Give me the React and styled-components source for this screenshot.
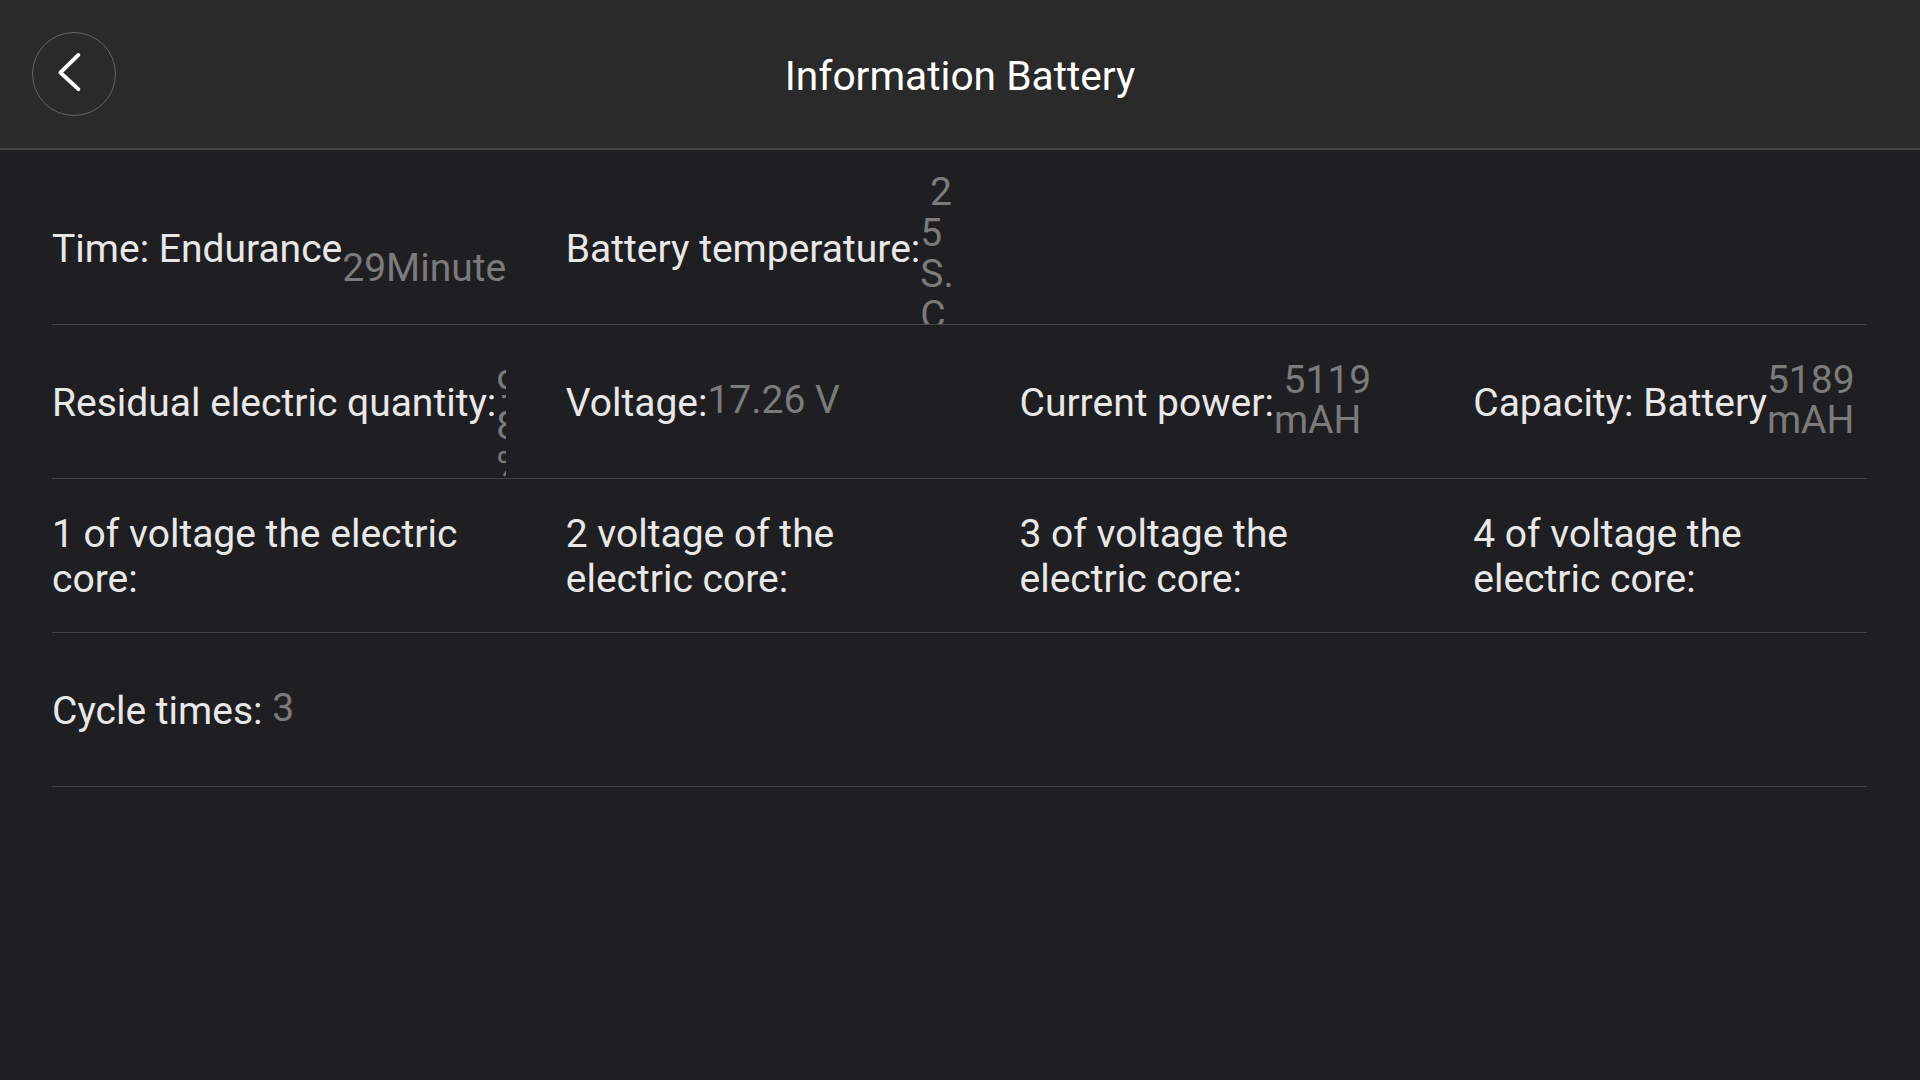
import React from 'react';
import styled, { createGlobalStyle } from 'styled-components';

const GlobalStyle = createGlobalStyle`
  html, body {
    margin: 0;
    padding: 0;
    background: #1f1f21;
  }
  body {
    font-family: Roboto, 'Noto Sans', 'Liberation Sans', sans-serif;
    -webkit-font-smoothing: antialiased;
  }
`;

const StyledPage = styled.div`
  width: 1920px;
  height: 1080px;
  background: #1f1f21;
  overflow: hidden;
`;

const Header = styled.header`
  height: 148px;
  display: grid;
  grid-template-columns: 1fr auto 1fr;
  align-items: center;
  background: #2a2a2a;
  border-bottom: 2px solid #474747;
`;

const BackButton = styled.button`
  justify-self: start;
  margin-left: 32px;
  width: 84px;
  height: 84px;
  padding: 0;
  border-radius: 50%;
  border: 1.5px solid #646464;
  background: transparent;
  display: flex;
  align-items: center;
  justify-content: center;
  cursor: pointer;
  svg {
    display: block;
  }
`;

const Title = styled.h1`
  margin: 4px 0 0;
  font-size: 40.7px;
  font-weight: 400;
  line-height: 48px;
  color: #ffffff;
`;

const List = styled.div`
  padding: 21px 53px 0 52px;
`;

const Row = styled.div`
  display: grid;
  grid-template-columns: repeat(4, 1fr);
  height: 153px;
  border-bottom: 1px solid #444446;
`;

const Cell = styled.div`
  display: flex;
  align-items: center;
  min-width: 0;
  padding: 3px 0 0 60px;
  overflow: hidden;
  &:first-child {
    padding-left: 0;
  }
`;

const Label = styled.div`
  font-size: 39px;
  line-height: 45px;
  color: #e8e8e8;
  &:not(:only-child) {
    flex-shrink: 0;
    white-space: nowrap;
  }
`;

const Value = styled.div`
  flex-shrink: 0;
  font-size: 39px;
  line-height: ${(p) => p.$pitch}px;
  color: #7b7b7b;
  white-space: pre;
  transform: translateY(${(p) => p.$offset}px);
  span {
    display: block;
  }
`;

const rows = [
  [
    { label: 'Time: Endurance', value: ['\u00a0', '29Minute'], offset: -1 },
    { label: 'Battery temperature:', value: ['\u00a02', '5', 'S.', 'C'], offset: 5, pitch: 41 },
  ],
  [
    { label: 'Residual electric quantity:', value: ['9', '8', '%'], offset: 23 },
    { label: 'Voltage:', value: ['17.26 V'] },
    { label: 'Current power:', value: ['\u00a05119', 'mAH'] },
    { label: 'Capacity: Battery', value: ['5189', 'mAH'] },
  ],
  [
    { label: '1 of voltage the electric core:' },
    { label: '2 voltage of the electric core:' },
    { label: '3 of voltage the electric core:' },
    { label: '4 of voltage the electric core:' },
  ],
  [{ label: 'Cycle times:\u00a0', value: ['3'] }],
];

const App = () => (
  <StyledPage>
    <GlobalStyle />
    <Header>
      <BackButton aria-label="Back">
        <svg width="84" height="84" viewBox="0 0 84 84" fill="none">
          <path
            d="M48 24 L29.5 42 L48 59"
            stroke="#ffffff"
            strokeWidth="4"
            strokeLinecap="round"
            strokeLinejoin="round"
            transform="translate(-1.5 -1.5)"
          />
        </svg>
      </BackButton>
      <Title>Information Battery</Title>
      <div />
    </Header>
    <List>
      {rows.map((cells, i) => (
        <Row key={i}>
          {cells.map((cell) => (
            <Cell key={cell.label}>
              <Label>{cell.label}</Label>
              {cell.value && (
                <Value $offset={cell.offset ?? -3} $pitch={cell.pitch ?? 40.5}>
                  {cell.value.map((line, j) => (
                    <span key={j}>{line}</span>
                  ))}
                </Value>
              )}
            </Cell>
          ))}
        </Row>
      ))}
    </List>
  </StyledPage>
);

export default App;
